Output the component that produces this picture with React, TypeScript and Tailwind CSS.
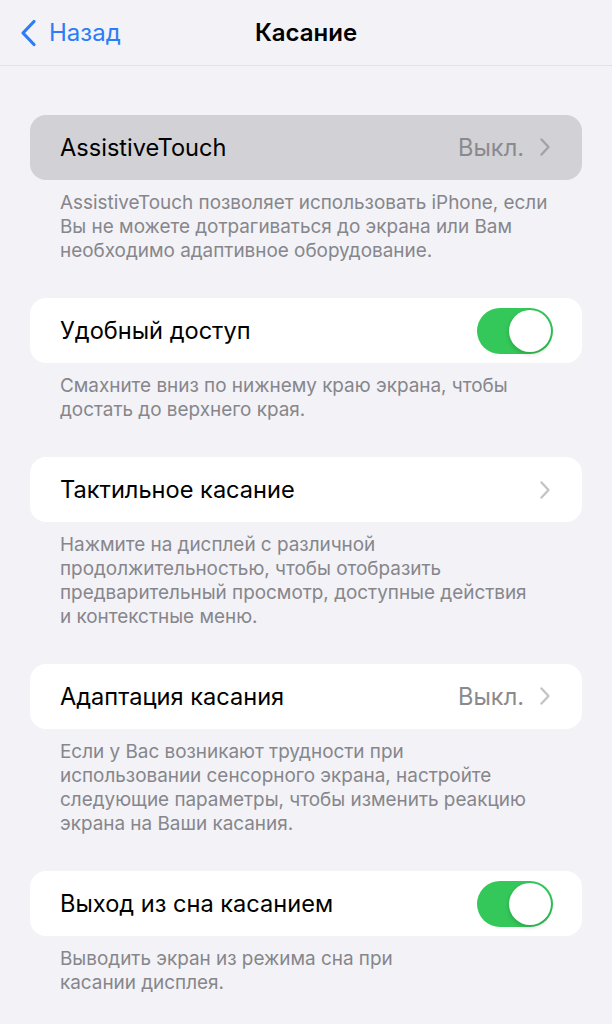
import React from "react"

type TRow = {
  title: string
  value?: string
  chevron?: boolean
  toggle?: boolean
  pressed?: boolean
  footer: string[]
}

const ROWS: TRow[] = [
  {
    title: "AssistiveTouch",
    value: "Выкл.",
    chevron: true,
    pressed: true,
    footer: [
      "AssistiveTouch позволяет использовать iPhone, если",
      "Вы не можете дотрагиваться до экрана или Вам",
      "необходимо адаптивное оборудование.",
    ],
  },
  {
    title: "Удобный доступ",
    toggle: true,
    footer: [
      "Смахните вниз по нижнему краю экрана, чтобы",
      "достать до верхнего края.",
    ],
  },
  {
    title: "Тактильное касание",
    chevron: true,
    footer: [
      "Нажмите на дисплей с различной",
      "продолжительностью, чтобы отобразить",
      "предварительный просмотр, доступные действия",
      "и контекстные меню.",
    ],
  },
  {
    title: "Адаптация касания",
    value: "Выкл.",
    chevron: true,
    footer: [
      "Если у Вас возникают трудности при",
      "использовании сенсорного экрана, настройте",
      "следующие параметры, чтобы изменить реакцию",
      "экрана на Ваши касания.",
    ],
  },
  {
    title: "Выход из сна касанием",
    toggle: true,
    footer: ["Выводить экран из режима сна при", "касании дисплея."],
  },
]

const Chevron = ({ dark }: { dark?: boolean }) => (
  <svg width="12" height="20" viewBox="0 0 12 20" fill="none">
    <path
      d="M2.5 2.5 L9.5 10 L2.5 17.5"
      stroke={dark ? "#a2a2a7" : "#c4c4c8"}
      strokeWidth="2.4"
      strokeLinecap="round"
      strokeLinejoin="round"
    />
  </svg>
)

const Toggle = () => (
  <div className="flex h-[46px] w-[76px] items-center justify-end rounded-full bg-[#34c759] p-[2px]">
    <div className="h-[42px] w-[42px] rounded-full bg-white shadow-[0_2px_4px_rgba(0,0,0,0.18)]" />
  </div>
)

const Row = ({ title, value, chevron, toggle, pressed, footer }: TRow) => {
  return (
    <section>
      <div
        className={`mx-[30px] flex h-[65px] items-center justify-between rounded-[16px] pl-[30px] ${
          toggle ? "pr-[29px]" : "pr-[31px]"
        } ${pressed ? "bg-[#d1d1d6]" : "bg-white"}`}
      >
        <span className="text-[23.6px] text-black">{title}</span>
        <div className="flex items-center gap-[15px]">
          {value && <span className="text-[23.6px] text-[#8a8a8e]">{value}</span>}
          {chevron && <Chevron dark={pressed} />}
          {toggle && <Toggle />}
        </div>
      </div>
      {/* Footer note */}
      <div className="mb-[35px] mt-[11px] px-[60px] text-[18.9px] leading-[24px] text-[#86868b]">
        {footer.map((line) => (
          <p key={line}>{line}</p>
        ))}
      </div>
    </section>
  )
}

export default function App() {
  return (
    <div
      className="min-h-[1024px] w-[612px] bg-[#f2f2f7]"
      style={{ fontFamily: "Inter, 'Noto Sans', sans-serif" }}
    >
      {/* Navigation bar */}
      <header className="relative flex h-[66px] items-center border-b border-[#e2e2e6]">
        <div className="flex items-center gap-[12px] pl-[20px] text-[#2b7cf6]">
          <svg width="17" height="28" viewBox="0 0 17 28" fill="none">
            <path
              d="M14 2.5 L3 14 L14 25.5"
              stroke="currentColor"
              strokeWidth="3.2"
              strokeLinecap="round"
              strokeLinejoin="round"
            />
          </svg>
          <span className="text-[24px]">Назад</span>
        </div>
        <h1 className="absolute left-1/2 -translate-x-1/2 text-[24px] font-semibold text-black">
          Касание
        </h1>
      </header>

      <main className="pt-[49px]">
        {ROWS.map((row) => (
          <Row key={row.title} {...row} />
        ))}
      </main>
    </div>
  )
}
